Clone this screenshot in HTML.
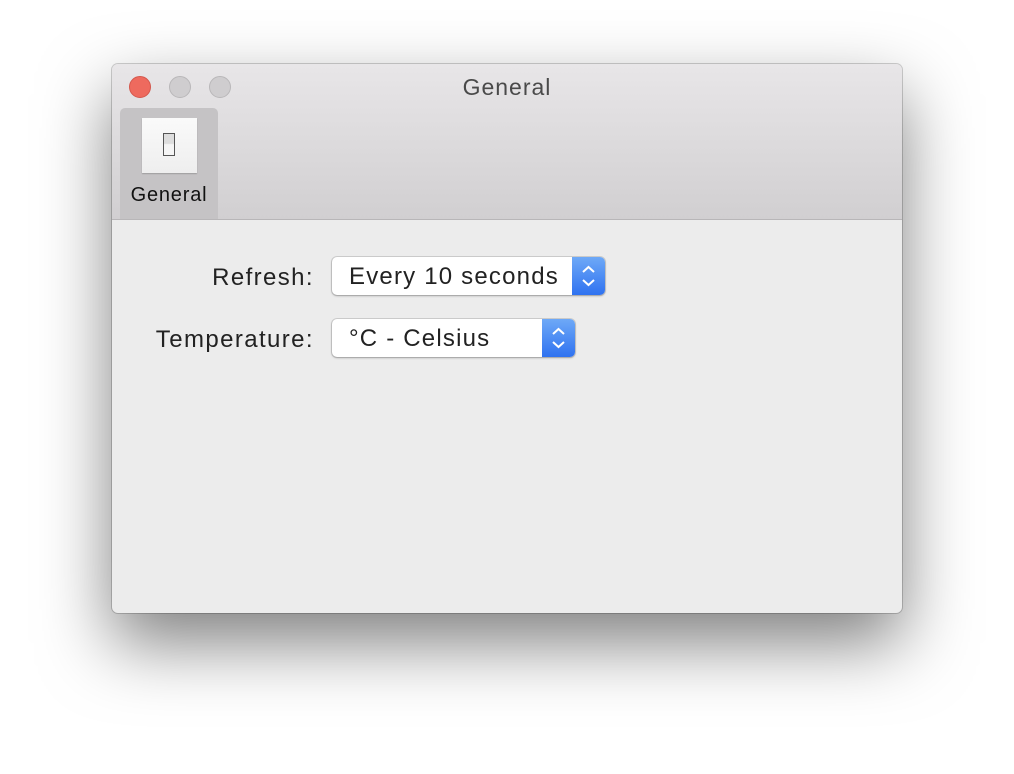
<!DOCTYPE html><html><head><style>
body{margin:0;width:1014px;height:774px;background:#fff;position:relative;overflow:hidden;font-family:"Liberation Sans",sans-serif}
.win{position:absolute;left:112px;top:64px;width:790px;height:549px;border-radius:6px;background:#ececec;box-shadow:0 30px 70px rgba(0,0,0,.5),0 0 0 1px rgba(0,0,0,.18);overflow:hidden}
.tb{position:absolute;left:0;top:0;width:790px;height:155px;background:linear-gradient(#e8e6e8,#d1cfd1);border-bottom:1px solid #b8b6b8}
.dot{position:absolute;top:12px;width:22px;height:22px;border-radius:50%;box-sizing:border-box}
.title{position:absolute;top:10px;width:100%;text-align:center;font-size:23px;color:#4a4a4a;letter-spacing:1px}
.item{position:absolute;left:8px;top:44px;width:98px;height:111px;background:#c5c3c5;border-radius:5px 5px 0 0}
.icon{position:absolute;left:22px;top:10px;width:55px;height:55px;background:linear-gradient(#fafafa,#eeeeee);box-shadow:0 1px 1px rgba(0,0,0,.2)}
.sw{position:absolute;left:21px;top:15px;width:12px;height:23px;border:1.5px solid #555;background:linear-gradient(#ddd 45%,#f5f5f5 50%);box-sizing:border-box}
.il{position:absolute;top:76px;width:100%;text-align:center;font-size:20px;color:#111;letter-spacing:.8px}
.lbl{position:absolute;font-size:24px;color:#222;text-align:right;width:200px;letter-spacing:1.4px}
.pop{position:absolute;height:38px;background:#fff;border-radius:5px;box-shadow:0 0 0 1px rgba(0,0,0,.12),0 1px 2px rgba(0,0,0,.25);font-size:24px;color:#222;line-height:40px;padding-left:17px;box-sizing:border-box;letter-spacing:1.2px}
.arr{position:absolute;right:0;top:0;width:33px;height:38px;background:linear-gradient(#6ea9f7,#2f72f0);border-radius:0 5px 5px 0}
</style></head><body>
<div class="win">
<div class="tb">
<div class="dot" style="left:17px;background:#ee6a5e;border:1px solid #d4574c"></div>
<div class="dot" style="left:57px;background:#cfcdcf;border:1px solid #b9b7b9"></div>
<div class="dot" style="left:97px;background:#cfcdcf;border:1px solid #b9b7b9"></div>
<div class="title">General</div>
<div class="item"><div class="icon"><div class="sw"></div></div><div class="il">General</div></div>
</div>
<div class="lbl" style="left:2px;top:200px">Refresh:</div>
<div class="lbl" style="left:2px;top:262px">Temperature:</div>
<div class="pop" style="left:220px;top:193px;width:273px">Every 10 seconds<div class="arr"><svg width="33" height="38"><path d="M11 15l5.5-5 5.5 5M11 23l5.5 5 5.5-5" stroke="#fff" stroke-width="2" fill="none"/></svg></div></div>
<div class="pop" style="left:220px;top:255px;width:243px">°C - Celsius<div class="arr"><svg width="33" height="38"><path d="M11 15l5.5-5 5.5 5M11 23l5.5 5 5.5-5" stroke="#fff" stroke-width="2" fill="none"/></svg></div></div>
</div>
</body></html>
